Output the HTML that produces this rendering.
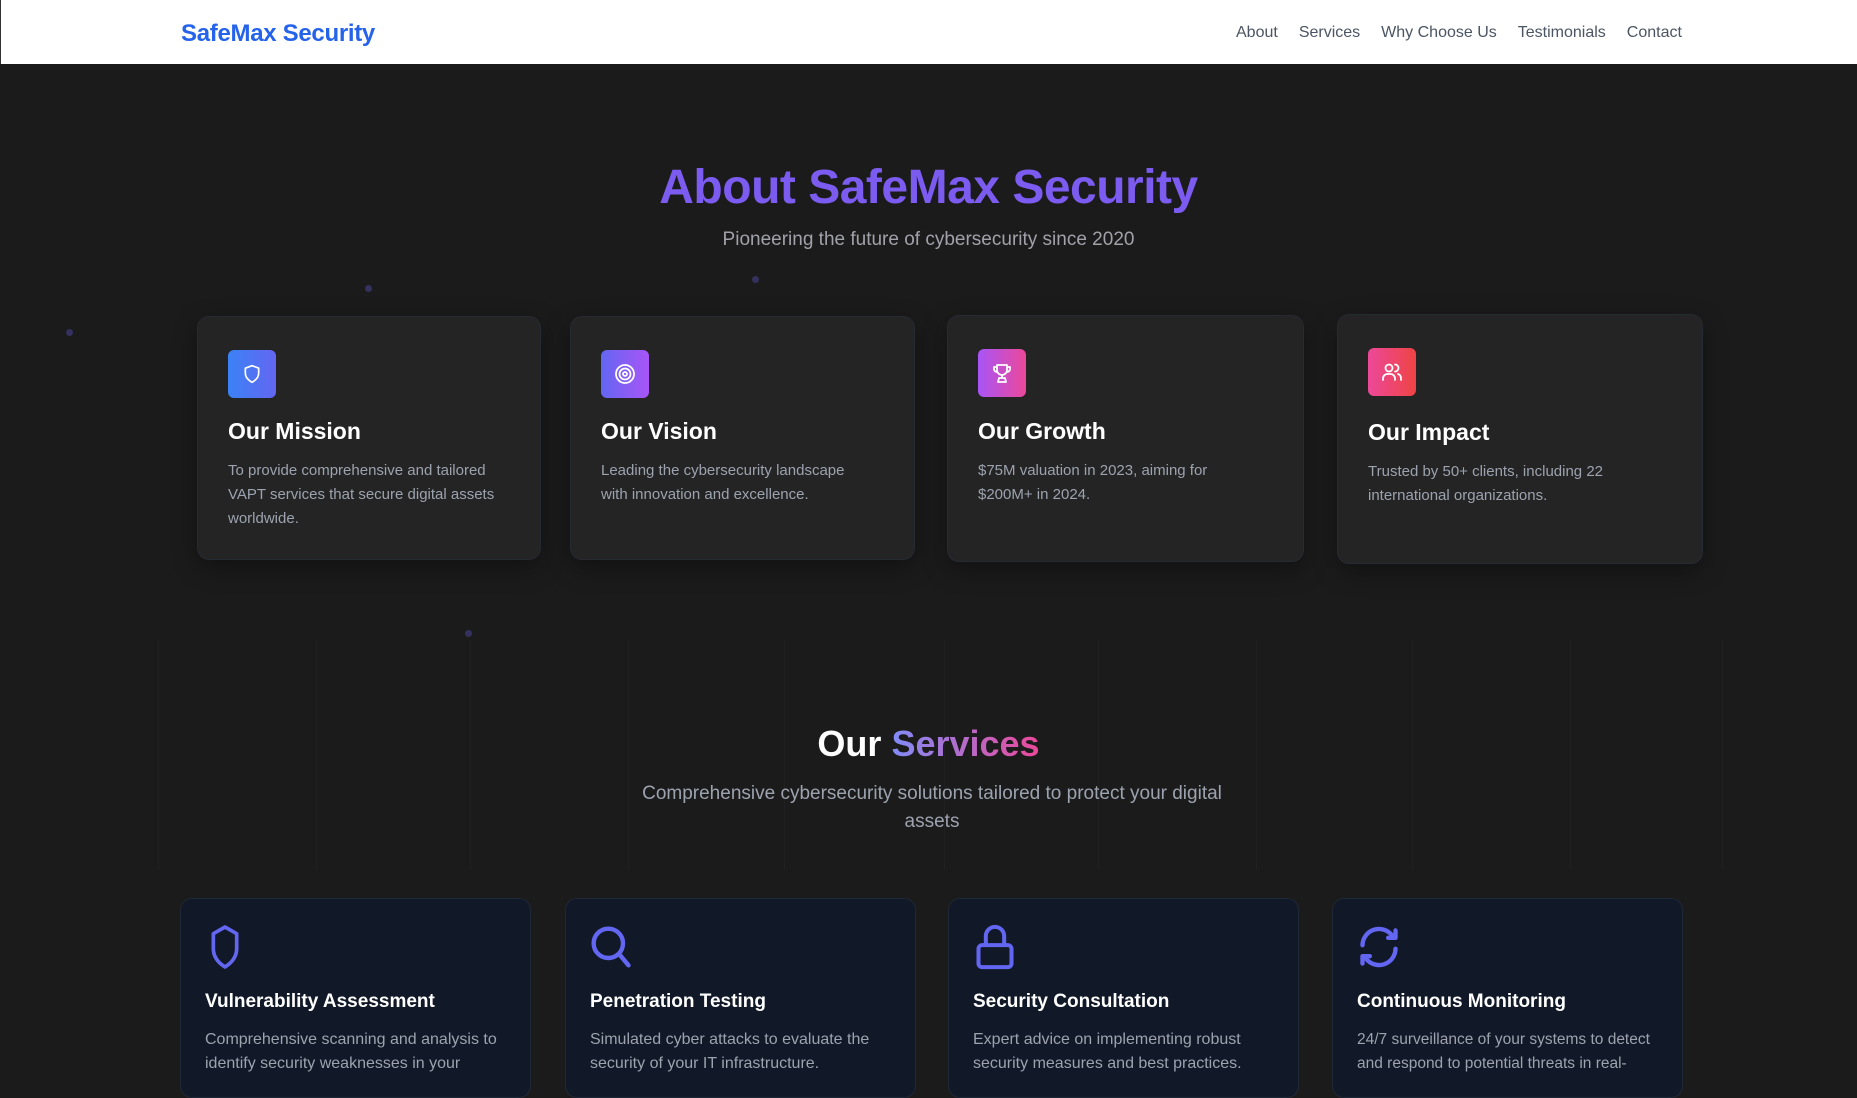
<!DOCTYPE html>
<html><head><meta charset="utf-8">
<style>
*{margin:0;padding:0;box-sizing:border-box}
body{width:1857px;height:1079px;overflow:hidden;background:#1b1b1b;font-family:"Liberation Sans",sans-serif;position:relative}
header{position:absolute;left:0;top:0;width:1857px;height:64px;background:#fff;border-left:1px solid #333}
.logo{position:absolute;left:180px;top:20px;font-size:24px;font-weight:bold;color:#2563eb;letter-spacing:-0.3px}
nav{position:absolute;top:24px;left:1235px;font-size:16px;color:#4b5563}
nav span{margin-right:21px}
.abs{position:absolute}
.center{left:0;width:1857px;text-align:center}
h1{font-size:48px;font-weight:bold;color:#7c5cf0;top:160px;letter-spacing:-0.5px}
.sub{font-size:19px;color:#a1a1aa;top:229px}
.card{position:absolute;background:#242424;border:1px solid #262a32;border-radius:12px;box-shadow:0 8px 24px rgba(0,0,0,.35)}
.ib{position:absolute;left:30px;top:33px;width:48px;height:48px;border-radius:6px;display:flex;align-items:center;justify-content:center}
.card h3{position:absolute;left:30px;top:101px;font-size:23px;color:#fff;font-weight:bold}
.card p{position:absolute;left:30px;top:142px;width:280px;font-size:15px;line-height:24px;color:#9ca3af}
.sv{position:absolute;top:898px;width:351px;height:200px;background:#111827;border:1px solid #1f2937;border-radius:12px}
.sv svg{position:absolute;left:24px;top:24px}
.sv h3{position:absolute;left:24px;top:92px;font-size:19px;color:#fff;font-weight:bold}
.sv p{position:absolute;left:24px;top:129px;width:310px;font-size:16px;line-height:24px;color:#9ca3af}
.dot{position:absolute;width:7px;height:7px;border-radius:50%;background:#34315e}
.vl{position:absolute;top:640px;width:1px;height:230px;background:#202020}
</style></head><body>
<header><div class="logo">SafeMax Security</div>
<nav><span>About</span><span>Services</span><span>Why Choose Us</span><span>Testimonials</span><span>Contact</span></nav></header>

<div class="vl" style="left:158px"></div><div class="vl" style="left:316px"></div><div class="vl" style="left:470px"></div><div class="vl" style="left:628px"></div><div class="vl" style="left:784px"></div><div class="vl" style="left:944px"></div><div class="vl" style="left:1098px"></div><div class="vl" style="left:1256px"></div><div class="vl" style="left:1412px"></div><div class="vl" style="left:1570px"></div><div class="vl" style="left:1722px"></div>

<div class="dot" style="left:365px;top:285px"></div>
<div class="dot" style="left:752px;top:276px"></div>
<div class="dot" style="left:66px;top:329px"></div>
<div class="dot" style="left:465px;top:630px"></div>

<h1 class="abs center">About SafeMax Security</h1>
<div class="abs center sub">Pioneering the future of cybersecurity since 2020</div>

<div class="card" style="left:197px;top:316px;width:344px;height:244px">
<div class="ib" style="background:linear-gradient(90deg,#3b82f6,#6366f1)"><svg width="20" height="22" viewBox="0 0 24 24" fill="none" stroke="#fff" stroke-width="2" stroke-linejoin="round"><path d="M12 2l8 3v6c0 5-3.5 8.5-8 11-4.5-2.5-8-6-8-11V5z"/></svg></div>
<h3>Our Mission</h3><p>To provide comprehensive and tailored VAPT services that secure digital assets worldwide.</p></div>

<div class="card" style="left:570px;top:316px;width:345px;height:244px">
<div class="ib" style="background:linear-gradient(90deg,#6366f1,#a855f7)"><svg width="24" height="24" viewBox="0 0 24 24" fill="none" stroke="#fff" stroke-width="1.8"><circle cx="12" cy="12" r="9"/><circle cx="12" cy="12" r="5.5"/><circle cx="12" cy="12" r="2"/></svg></div>
<h3>Our Vision</h3><p style="width:265px">Leading the cybersecurity landscape with innovation and excellence.</p></div>

<div class="card" style="left:947px;top:315px;width:357px;height:247px">
<div class="ib" style="background:linear-gradient(90deg,#a855f7,#ec4899)"><svg width="24" height="24" viewBox="0 0 24 24" fill="none" stroke="#fff" stroke-width="1.8" stroke-linejoin="round"><path d="M7 4h10v5a5 5 0 0 1-10 0z"/><path d="M7 6H4v2a3 3 0 0 0 3 3M17 6h3v2a3 3 0 0 1-3 3"/><path d="M12 14v3M8 21h8l-1-4H9z"/></svg></div>
<h3 style="top:102px">Our Growth</h3><p style="top:143px">$75M valuation in 2023, aiming for $200M+ in 2024.</p></div>

<div class="card" style="left:1337px;top:314px;width:366px;height:250px">
<div class="ib" style="background:linear-gradient(90deg,#ec4899,#ef4444)"><svg width="24" height="24" viewBox="0 0 24 24" fill="none" stroke="#fff" stroke-width="1.8" stroke-linecap="round"><circle cx="9" cy="8" r="3.5"/><path d="M3 20v-1.5A4.5 4.5 0 0 1 7.5 14h3a4.5 4.5 0 0 1 4.5 4.5V20"/><path d="M15 4.5a3.5 3.5 0 0 1 0 7M18 14a4.5 4.5 0 0 1 3 4.2V20"/></svg></div>
<h3 style="top:104px">Our Impact</h3><p style="top:145px">Trusted by 50+ clients, including 22 international organizations.</p></div>

<div class="abs center" style="top:723px;font-size:36px;font-weight:bold;color:#fff">Our <span style="background:linear-gradient(90deg,#818cf8,#ec4899);-webkit-background-clip:text;background-clip:text;color:transparent">Services</span></div>
<div class="abs" style="left:618px;width:628px;top:780px;text-align:center;font-size:19px;line-height:28px;color:#9ca3af">Comprehensive cybersecurity solutions tailored to protect your digital assets</div>

<div class="sv" style="left:180px"><svg width="40" height="48" viewBox="0 0 24 28" fill="none" stroke="#6366f1" stroke-width="2.2" stroke-linejoin="round"><path d="M12 2l7 4v9c0 5-3 8.5-7 11-4-2.5-7-6-7-11V6z"/></svg>
<h3>Vulnerability Assessment</h3><p>Comprehensive scanning and analysis to identify security weaknesses in your</p></div>
<div class="sv" style="left:565px"><svg width="44" height="48" viewBox="0 0 24 26" fill="none" stroke="#6366f1" stroke-width="2.4" stroke-linecap="round"><circle cx="10" cy="11" r="8"/><path d="M16 17l5 6"/></svg>
<h3>Penetration Testing</h3><p>Simulated cyber attacks to evaluate the security of your IT infrastructure.</p></div>
<div class="sv" style="left:948px"><svg width="44" height="48" viewBox="0 0 24 26" fill="none" stroke="#6366f1" stroke-width="2.2" stroke-linejoin="round"><rect x="3" y="12" width="18" height="12" rx="2"/><path d="M7 12V7a5 5 0 0 1 10 0v5"/></svg>
<h3>Security Consultation</h3><p>Expert advice on implementing robust security measures and best practices.</p></div>
<div class="sv" style="left:1332px"><svg width="44" height="48" viewBox="0 0 24 26" fill="none" stroke="#6366f1" stroke-width="2.4" stroke-linecap="round" stroke-linejoin="round"><path d="M3 12a9 9 0 0 1 16-5.5M21 4v4h-4M21 14a9 9 0 0 1-16 5.5M3 22v-4h4"/></svg>
<h3>Continuous Monitoring</h3><p style="width:320px;font-size:15.5px">24/7 surveillance of your systems to detect and respond to potential threats in real-</p></div>
</body></html>
